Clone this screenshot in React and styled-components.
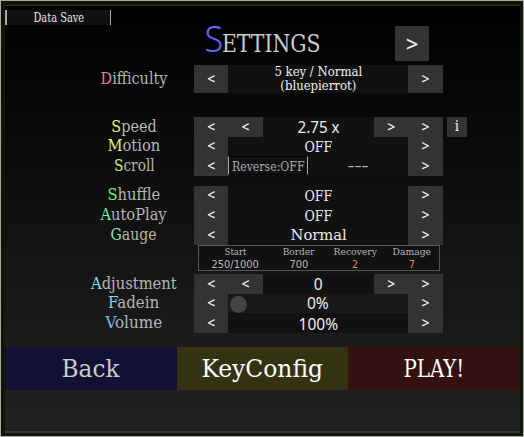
import React, { useLayoutEffect, useRef, useState } from "react";
import styled, { createGlobalStyle } from "styled-components";

const GlobalStyle = createGlobalStyle`
  * { box-sizing: border-box; }
  body { margin: 0; background: #101300; overflow: hidden; }
`;

const serif = `"DejaVu Serif Condensed", "DejaVu Serif", serif`;
const sans = `"Noto Sans", sans-serif`;

const Frame = styled.div`
  width: 524px;
  height: 437px;
  padding: 4px 3px 3px 4px;
  background: #101400;
  border: 1px solid #a4a8a6;
  font-family: ${serif};
  font-stretch: condensed;
`;

const Panel = styled.main`
  height: 428px;
  display: flex;
  flex-direction: column;
  background: linear-gradient(#000, #050505 15%, #111 50%, #222);
  border-top: 1px solid #333;
  border-bottom: 2px solid #393939;
`;

const Glyphs = styled.span`
  display: inline-block;
  flex: none;
  white-space: nowrap;
`;

/* Condenses or widens a run of text to the given width. */
function Fit({ width, children }) {
  const ref = useRef(null);
  const [scale, setScale] = useState(1);
  useLayoutEffect(() => {
    setScale(width / ref.current.offsetWidth);
  }, [width]);
  return <Glyphs ref={ref} style={{ transform: `scaleX(${scale})` }}>{children}</Glyphs>;
}

const DataSave = styled.button`
  display: flex;
  align-items: center;
  justify-content: center;
  width: 106px;
  height: 15px;
  margin: 4px 0 0;
  padding: 0;
  font: 12px/14px ${serif};
  color: #e4e4e4;
  background: #111;
  border: 0 solid #a8a8a8;
  border-width: 0 1px 0 2px;
`;

const Header = styled.header`
  display: flex;
  height: 36px;
  margin: 1px 0 0 199px;
`;

const Title = styled.h1`
  display: flex;
  width: 191px;
  margin: 0;
  font-weight: 400;
`;

const Initial = styled.span`
  display: flex;
  justify-content: center;
  width: 19px;
  font: 300 36px/26px ${sans};
  color: #6666ff;
`;

const TitleRest = styled.span`
  display: flex;
  justify-content: center;
  width: 97px;
  font-size: 24px;
  line-height: 36px;
  color: #ccc;
`;

const Arrow = styled.button`
  display: flex;
  align-items: center;
  justify-content: center;
  width: ${(p) => p.$width || 34.3}px;
  height: ${(p) => p.$height || 19.67}px;
  padding: 0;
  border: 0;
  background: #333;
  color: #f2f2f2;
  font: 500 ${(p) => p.$size || 14}px/1 ${sans};
`;

const Group = styled.section`
  margin-top: ${(p) => p.$gap}px;
`;

const Row = styled.div`
  display: grid;
  grid-template-columns: 120px 34.3px 180px 34.3px 19.67px;
  height: ${(p) => p.$height || 19.67}px;
  margin-left: 69px;
`;

const Label = styled.div`
  display: flex;
  align-items: center;
  justify-content: center;
  font-size: 16px;
  line-height: 18px;
  color: #b5b5b5;
`;

const Accent = styled.span`
  color: ${(p) => p.$color};
`;

const Field = styled.div`
  display: flex;
  background: ${(p) => (p.$plain ? "transparent" : "#111")};
`;

const Value = styled.div`
  flex: 1;
  display: flex;
  flex-direction: column;
  align-items: center;
  justify-content: center;
  padding-top: ${(p) => p.$drop || 0}px;
  font-family: ${(p) => (p.$sans ? sans : serif)};
  font-size: ${(p) => p.$size || 15.5}px;
  line-height: ${(p) => p.$leading || 18}px;
  color: ${(p) => (p.$dim ? "#bbb" : "#eee")};
`;

const SliderValue = styled(Value)`
  margin-left: -20px;
`;

const Thumb = styled.div`
  width: 17px;
  height: 17px;
  margin: 2px 0 0 2px;
  border-radius: 50%;
  background: #444;
`;

const Reverse = styled.button`
  display: flex;
  align-items: center;
  justify-content: center;
  width: 80px;
  height: 19px;
  padding: 1px 0 0;
  border: 1px solid #000;
  border-left-color: #aaa;
  border-right-color: #aaa;
  background: #111;
  color: #aaa;
  font: 13.5px/15px ${serif};
`;

const Info = styled(Arrow)`
  margin-left: 4.5px;
  font-family: ${serif};
  font-size: 15px;
`;

const GaugeBox = styled.div`
  display: grid;
  grid-template-columns: 73px 53px 60px 54px;
  width: 242px;
  height: 26px;
  margin: 0 0 0 193px;
  border: 1px solid #555;
  background: #111;
`;

const Stat = styled.div`
  display: flex;
  flex-direction: column;
  align-items: center;
  font-size: 10px;
  line-height: 12px;
  color: #b5b5b5;
`;

const StatValue = styled.div`
  font-family: "DejaVu Sans Condensed", "DejaVu Sans", sans-serif;
  font-size: 10.3px;
  color: ${(p) => (p.$hot ? "#e88d5c" : "#bbb")};
`;

const Footer = styled.nav`
  display: grid;
  grid-template-columns: 171.5px 171.5px 1fr;
  height: 43px;
  margin-top: 13.7px;
`;

const Action = styled.button`
  display: flex;
  align-items: center;
  justify-content: center;
  padding: 1px 0 0;
  border: 0;
  font: 24.5px/30px ${serif};
  color: ${(p) => p.$color || "#fff"};
  background: ${(p) => p.$bg};
`;

function Setting({ name, width, color, height, children, plain, info }) {
  return (
    <Row $height={height}>
      <Label><Fit width={width}><Accent $color={color}>{name[0]}</Accent>{name.slice(1)}</Fit></Label>
      <Arrow $height={height}>&lt;</Arrow>
      <Field $plain={plain}>{children}</Field>
      <Arrow $height={height}>&gt;</Arrow>
      {info && <Info $width={19.6}>i</Info>}
    </Row>
  );
}

const Text = ({ width, numeric, children }) => (
  <Value $sans={numeric} $drop={1}><Fit width={width}>{children}</Fit></Value>
);

const Stepper = ({ width, children }) => (
  <>
    <Arrow>&lt;</Arrow>
    <Text width={width} numeric>{children}</Text>
    <Arrow>&gt;</Arrow>
  </>
);

const stats = [
  { name: "Start", value: "250/1000", w: 22, vw: 47 },
  { name: "Border", value: "700", w: 32, vw: 19 },
  { name: "Recovery", value: "2", w: 43, vw: 6, hot: true },
  { name: "Damage", value: "7", w: 39, vw: 6, hot: true },
];

export default function App() {
  return (
    <Frame>
      <GlobalStyle />
      <Panel>
        <DataSave><Fit width={51}>Data Save</Fit></DataSave>
        <Header>
          <Title>
            <Initial><Fit width={19}>S</Fit></Initial>
            <TitleRest><Fit width={98}>ETTINGS</Fit></TitleRest>
          </Title>
          <Arrow $height={34.5} $size={22}>&gt;</Arrow>
        </Header>
        <Group $gap={3}>
          <Setting name="Difficulty" width={67} color="#e08888" height={28}>
            <Value $size={13} $leading={14}>
              <Fit width={88}>5 key / Normal</Fit>
              <Fit width={76}>(bluepierrot)</Fit>
            </Value>
          </Setting>
        </Group>
        <Group $gap={24}>
          <Setting name="Speed" width={45} color="#eeee77" info><Stepper width={42}>2.75 x</Stepper></Setting>
          <Setting name="Motion" width={53} color="#e5ee77"><Text width={28}>OFF</Text></Setting>
          <Setting name="Scroll" width={41} color="#ccee77">
            <Reverse><Fit width={73}>Reverse:OFF</Fit></Reverse>
            <Value $dim><Fit width={21}>---</Fit></Value>
          </Setting>
        </Group>
        <Group $gap={9.7}>
          <Setting name="Shuffle" width={53} color="#77ee77"><Text width={28}>OFF</Text></Setting>
          <Setting name="AutoPlay" width={66} color="#77eea5"><Text width={28}>OFF</Text></Setting>
          <Setting name="Gauge" width={46} color="#77eebb"><Text width={56}>Normal</Text></Setting>
        </Group>
        <GaugeBox>
          {stats.map((s) => (
            <Stat key={s.name}>
              <Fit width={s.w}>{s.name}</Fit>
              <StatValue $hot={s.hot}><Fit width={s.vw}>{s.value}</Fit></StatValue>
            </Stat>
          ))}
        </GaugeBox>
        <Group $gap={3.3}>
          <Setting name="Adjustment" width={86} color="#77eeee"><Stepper width={9}>0</Stepper></Setting>
          <Setting name="Fadein" width={51} color="#77ddee" plain>
            <Thumb />
            <SliderValue $sans><Fit width={22}>0%</Fit></SliderValue>
          </Setting>
          <Setting name="Volume" width={57} color="#77bbee"><Text width={39} numeric>100%</Text></Setting>
        </Group>
        <Footer>
          <Action $bg="#111133" $color="#ccc"><Fit width={58}>Back</Fit></Action>
          <Action $bg="#333311"><Fit width={121}>KeyConfig</Fit></Action>
          <Action $bg="#331111"><Fit width={61}>PLAY!</Fit></Action>
        </Footer>
      </Panel>
    </Frame>
  );
}
